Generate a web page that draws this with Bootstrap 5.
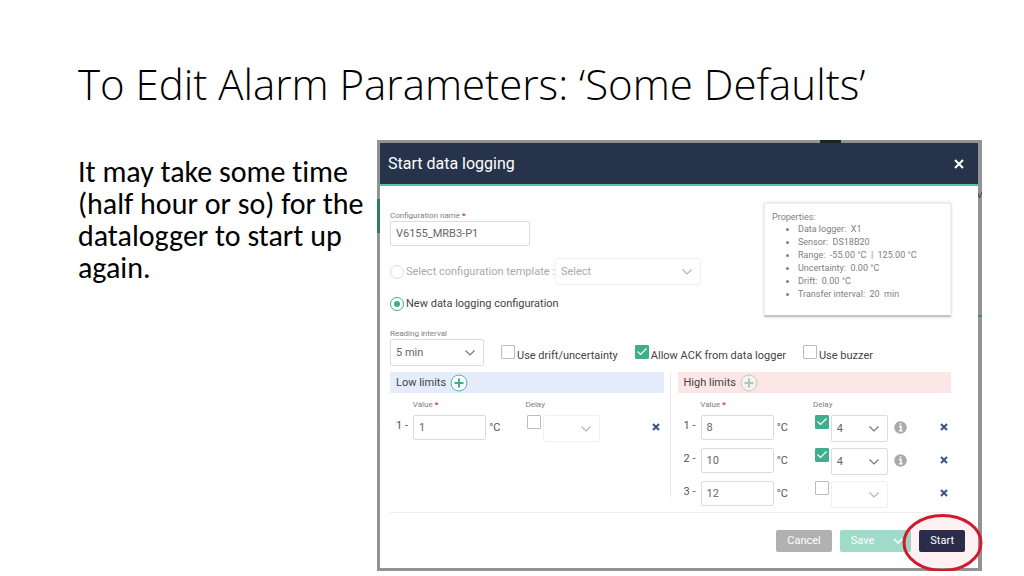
<!DOCTYPE html>
<html lang="en">
<head>
<meta charset="utf-8">
<meta name="viewport" content="width=device-width, initial-scale=1">
<title>To Edit Alarm Parameters: ‘Some Defaults’</title>
<link href="https://cdn.jsdelivr.net/npm/bootstrap@5.3.0/dist/css/bootstrap.min.css" rel="stylesheet">
<style>
  body { background: #fff; color: #000; font-family: Carlito, Lato, sans-serif; }
  .slide { padding: 56px 42px 0 78px; }
  .slide-title { font-family: "Open Sans", sans-serif; font-weight: 300; font-size: 42px; line-height: 56px; margin: 0 0 28px; }
  .slide-cols { display: grid; grid-template-columns: 299fr 605fr; }
  .slide-text { font-size: 30px; line-height: 32px; margin: 16px 0 0; font-variant-ligatures: none; }

  .shot { background: #929493; padding: 3px 4px 3px 3px; font-family: Roboto, sans-serif; font-size: 11px; line-height: 14px; color: #555; }
  .bg-bit { position: absolute; }
  .bit-green { left: 0; top: 59px; width: 3px; height: 34px; background: #2f7f66; }
  .bit-dark { left: 443px; top: 0; width: 21px; height: 3px; background: #1d2524; }
  .bit-line { right: 0; top: 175px; width: 4px; height: 2px; background: #3d8f7c; }
  .bit-mark { right: 0; top: 52px; width: 4px; height: 7px; }
  .dialog { background: #fff; }
  .dialog-head { background: #27334b; color: #fff; height: 43px; padding: 0 13px 0 8px; border-bottom: 2px solid #5fbfa2; }
  .dialog-head h2 { font-size: 16px; line-height: 20px; font-weight: 400; margin: 0; }
  .dialog-body { padding: 17px 27px 0 10px; }
  .plain { background: none; border: 0; padding: 0; line-height: 0; }

  .tiny { font-size: 8px; line-height: 10px; color: #808080; display: block; }
  .tiny b { color: #e3263f; }
  .box { height: 25px; width: 100%; font-size: 11px; line-height: 14px; padding: 0 5px; color: #666; border: 1px solid #dcdcdc; border-radius: 2px; }
  select.box { height: 27px; padding: 0 20px 0 5px; background: #fff url("data:image/svg+xml,%3Csvg xmlns='http://www.w3.org/2000/svg' viewBox='0 0 10 6'%3E%3Cpath d='M.5 .5 5 5 9.500 .5' fill='none' stroke='%23777' stroke-width='1.2'/%3E%3C/svg%3E") no-repeat right 8px center / 10px 6px; }
  select.box:disabled { background-color: #fff; border-color: #f0f0f0; opacity: 1; color: #aaa; background-image: url("data:image/svg+xml,%3Csvg xmlns='http://www.w3.org/2000/svg' viewBox='0 0 10 6'%3E%3Cpath d='M.5 .5 5 5 9.500 .5' fill='none' stroke='%23b5b5b5' stroke-width='1.2'/%3E%3C/svg%3E"); }
  .w-name { width: 140px; }
  .w-template { width: 146px; }
  .w-interval { width: 94px; }

  .form-check-input.tick, .form-check-input.dot { margin: 0; width: 14px; height: 14px; flex: none; border: 1px solid #bbb; box-shadow: none; }
  .form-check-input.tick { border-radius: 1px; }
  .form-check-input.tick:checked { background-color: #3fae8c; border-color: #3fae8c; background-size: 14px 14px; background-image: url("data:image/svg+xml,%3Csvg xmlns='http://www.w3.org/2000/svg' viewBox='0 0 14 14'%3E%3Cpath d='M2.500 6.500 5.500 9.500 11.500 3.500' fill='none' stroke='white' stroke-width='1.2'/%3E%3C/svg%3E"); }
  .form-check-input.dot { border-color: #ddd; }
  .form-check-input.dot:disabled { opacity: 1; }
  .form-check-input.dot:checked { background-color: #fff; border-color: #3fae8c; background-size: 14px 14px; background-image: url("data:image/svg+xml,%3Csvg xmlns='http://www.w3.org/2000/svg' viewBox='0 0 14 14'%3E%3Ccircle cx='7' cy='7' r='3' fill='%233fae8c'/%3E%3C/svg%3E"); }
  .mode-label { padding-left: 2px; color: #444; }
  .form-check-input.dot:disabled ~ .mode-label { color: #aaa; opacity: 1; }
  .checks { gap: 17px; align-self: flex-end; margin: 0 0 3px 17px; }
  .low-label { padding: 4px 0 0 2px; color: #444; }

  .props { width: 187px; height: 114px; padding: 7px; font-size: 9px; line-height: 13px; color: #808080; border: 1px solid #eee; border-bottom: 2px solid #c4c4c4; box-shadow: 0 0 3px #ccc; }
  .props ul { margin: -1px 0 0; padding-left: 26px; }

  .limits { display: grid; grid-template-columns: 1fr 1fr; gap: 14px; border-bottom: 1px solid #eee; margin: 6px 0 0; }
  .limits > section + section { position: relative; }
  .limits > section + section::before { content: ""; position: absolute; left: -8px; top: 0; bottom: 15px; border-left: 1px solid #e8e8e8; }
  .limit-bar { height: 21px; padding-left: 6px; color: #444; font-size: 11px; line-height: 14px; font-weight: 400; margin: 0; }
  .bar-low { background: #e5ecfc; }
  .bar-high { background: #fce6e6; }
  .limit-line { display: grid; grid-template-columns: 17fr 73fr 41fr 16fr 57fr 6fr 46fr 11fr; padding-left: 6px; height: 33px; }
  .limit-line:last-child { height: 31px; }
  .limit-heads { height: 22px; padding-top: 7px; }
  .unit { padding: 6px 0 0 3px; }
  .num { padding-top: 4px; }
  .mid { padding-top: 6px; }
  .cross { padding-top: 8px; align-self: start; justify-self: start; }

  .dialog-foot { padding: 17px 13px 16px; }
  .act { height: 22px; border: 0; border-radius: 2px; padding: 0 11px; font-size: 11px; line-height: 14px; color: #fff; }
  .act-cancel { background: #b1b1b1; }
  .act-save { background: #9fdbc9; padding-right: 8px; gap: 19px; }
  .act-start { background: #2a2c49; position: relative; z-index: 1; }
  .ring { position: absolute; left: -17px; top: -17px; width: 81px; height: 60px; pointer-events: none; }
</style>
</head>
<body>
<main class="slide">
  <h1 class="slide-title">To Edit Alarm Parameters: ‘Some Defaults’</h1>
  <div class="slide-cols">
    <p class="slide-text">It may take some time (half hour or so) for the datalogger to start up again.</p>
    <div class="shot position-relative">
      <span class="bg-bit bit-green"></span><span class="bg-bit bit-dark"></span><span class="bg-bit bit-line"></span>
      <svg class="bg-bit bit-mark" viewBox="0 0 4 7"><path d="M0 1l1.500 5L4 0" fill="none" stroke="#444"/></svg>
      <form class="dialog">
        <header class="dialog-head d-flex align-items-center justify-content-between">
          <h2>Start data logging</h2>
          <button type="button" class="plain" aria-label="Close"><svg width="12" height="12" viewBox="0 0 12 12"><path d="M2 2l8 8M10 2l-8 8" stroke="#fff" stroke-width="2"/></svg></button>
        </header>
        <div class="dialog-body">
          <div class="d-flex justify-content-between align-items-start">
            <div class="pt-2">
              <label class="tiny" for="cfg">Configuration name <b>*</b></label>
              <input class="form-control box w-name" id="cfg" type="text" value="V6155_MRB3-P1">
              <div class="d-flex align-items-center mt-2 pt-1">
                <input class="form-check-input dot" type="radio" name="mode" id="tpl" disabled>
                <label class="mode-label" for="tpl">Select configuration template :</label>
                <select class="form-select box w-template" aria-label="Template" disabled><option>Select</option></select>
              </div>
              <div class="d-flex align-items-center mt-2 pt-1">
                <input class="form-check-input dot" type="radio" name="mode" id="fresh" checked>
                <label class="mode-label" for="fresh">New data logging configuration</label>
              </div>
            </div>
            <aside class="props">Properties:
              <ul>
                <li>Data logger:&nbsp; X1</li>
                <li>Sensor:&nbsp; DS18B20</li>
                <li>Range:&nbsp; -55.00 °C&nbsp; |&nbsp; 125.00 °C</li>
                <li>Uncertainty:&nbsp; 0.00 °C</li>
                <li>Drift:&nbsp; 0.00 °C</li>
                <li>Transfer interval:&nbsp; 20&nbsp; min</li>
              </ul>
            </aside>
          </div>
          <div class="d-flex align-items-center interval-row pt-2 mt-1">
            <div class="w-interval">
              <label class="tiny" for="intv">Reading interval</label>
              <select class="form-select box" id="intv"><option>5 min</option></select>
            </div>
            <div class="d-flex checks">
              <div class="d-flex align-items-start"><input class="form-check-input tick" type="checkbox" id="drift"><label class="low-label" for="drift">Use drift/uncertainty</label></div>
              <div class="d-flex align-items-start"><input class="form-check-input tick" type="checkbox" id="ack" checked><label class="low-label" for="ack">Allow ACK from data logger</label></div>
              <div class="d-flex align-items-start"><input class="form-check-input tick" type="checkbox" id="buzz"><label class="low-label" for="buzz">Use buzzer</label></div>
            </div>
          </div>
          <div class="limits">
            <section>
              <h3 class="limit-bar bar-low d-flex align-items-center gap-1">Low limits
                <button type="button" class="plain" aria-label="Add low limit"><svg width="18" height="18" viewBox="0 0 18 18"><circle cx="9" cy="9" r="8" fill="#fff" stroke="#55b698"/><path d="M9 4.500v9M4.500 9h9" stroke="#3fae8c" stroke-width="2"/></svg></button></h3>
              <div class="limit-line limit-heads"><span></span><span class="tiny">Value <b>*</b></span><span></span><span class="tiny text-nowrap">Delay</span></div>
              <div class="limit-line">
                <span class="num">1 -</span><input class="form-control box" aria-label="Low limit 1" value="1"><span class="unit">°C</span>
                <input class="form-check-input tick" type="checkbox" aria-label="Delay low 1"><select class="form-select box" aria-label="Low delay 1" disabled><option></option></select>
                <span></span><span></span><button type="button" class="plain cross" aria-label="Remove"><svg width="8" height="8" viewBox="0 0 8 8"><path d="M1 1l6 6M7 1l-6 6" stroke="#3b5580" stroke-width="2"/></svg></button>
              </div>
            </section>
            <section>
              <h3 class="limit-bar bar-high d-flex align-items-center gap-1">High limits
                <button type="button" class="plain" aria-label="Add high limit"><svg width="18" height="18" viewBox="0 0 18 18"><circle cx="9" cy="9" r="8" fill="#f8f1ef" stroke="#c6c9c3"/><path d="M9 4.500v9M4.500 9h9" stroke="#9dcebd" stroke-width="2"/></svg></button></h3>
              <div class="limit-line limit-heads"><span></span><span class="tiny">Value <b>*</b></span><span></span><span class="tiny text-nowrap">Delay</span></div>
              <div class="limit-line">
                <span class="num">1 -</span><input class="form-control box" aria-label="High limit 1" value="8"><span class="unit">°C</span>
                <input class="form-check-input tick" type="checkbox" aria-label="Delay high 1" checked><select class="form-select box" aria-label="High delay 1"><option>4</option></select>
                <span></span><span class="mid"><svg class="d-block" width="13" height="13" viewBox="0 0 13 13"><circle cx="6.500" cy="6.500" r="6.200" fill="#aaa"/><path d="M5 5.500h2v4M5 9.800h3.500M5.700 3h1.600" fill="none" stroke="#fff" stroke-width="1.500"/></svg></span><button type="button" class="plain cross" aria-label="Remove"><svg width="8" height="8" viewBox="0 0 8 8"><path d="M1 1l6 6M7 1l-6 6" stroke="#3b5580" stroke-width="2"/></svg></button>
              </div>
              <div class="limit-line">
                <span class="num">2 -</span><input class="form-control box" aria-label="High limit 2" value="10"><span class="unit">°C</span>
                <input class="form-check-input tick" type="checkbox" aria-label="Delay high 2" checked><select class="form-select box" aria-label="High delay 2"><option>4</option></select>
                <span></span><span class="mid"><svg class="d-block" width="13" height="13" viewBox="0 0 13 13"><circle cx="6.500" cy="6.500" r="6.200" fill="#aaa"/><path d="M5 5.500h2v4M5 9.800h3.500M5.700 3h1.600" fill="none" stroke="#fff" stroke-width="1.500"/></svg></span><button type="button" class="plain cross" aria-label="Remove"><svg width="8" height="8" viewBox="0 0 8 8"><path d="M1 1l6 6M7 1l-6 6" stroke="#3b5580" stroke-width="2"/></svg></button>
              </div>
              <div class="limit-line">
                <span class="num">3 -</span><input class="form-control box" aria-label="High limit 3" value="12"><span class="unit">°C</span>
                <input class="form-check-input tick" type="checkbox" aria-label="Delay high 3"><select class="form-select box" aria-label="High delay 3" disabled><option></option></select>
                <span></span><span></span><button type="button" class="plain cross" aria-label="Remove"><svg width="8" height="8" viewBox="0 0 8 8"><path d="M1 1l6 6M7 1l-6 6" stroke="#3b5580" stroke-width="2"/></svg></button>
              </div>
            </section>
          </div>
        </div>
        <footer class="dialog-foot d-flex justify-content-end gap-2">
          <button type="button" class="act act-cancel">Cancel</button>
          <button type="button" class="act act-save d-flex align-items-center">Save <svg width="10" height="6" viewBox="0 0 10 6"><path d="M1 1l4 4 4-4" fill="none" stroke="#fff" stroke-width="1.500"/></svg></button>
          <div class="position-relative">
            <button type="button" class="act act-start">Start</button>
            <svg class="ring" viewBox="0 0 81 60"><ellipse cx="40.500" cy="30" rx="38.500" ry="27.500" fill="#f01030" fill-opacity=".06" stroke="#d11b2d" stroke-width="3"/></svg>
          </div>
        </footer>
      </form>
    </div>
  </div>
</main>
<script src="https://cdn.jsdelivr.net/npm/bootstrap@5.3.0/dist/js/bootstrap.bundle.min.js"></script>
</body>
</html>
